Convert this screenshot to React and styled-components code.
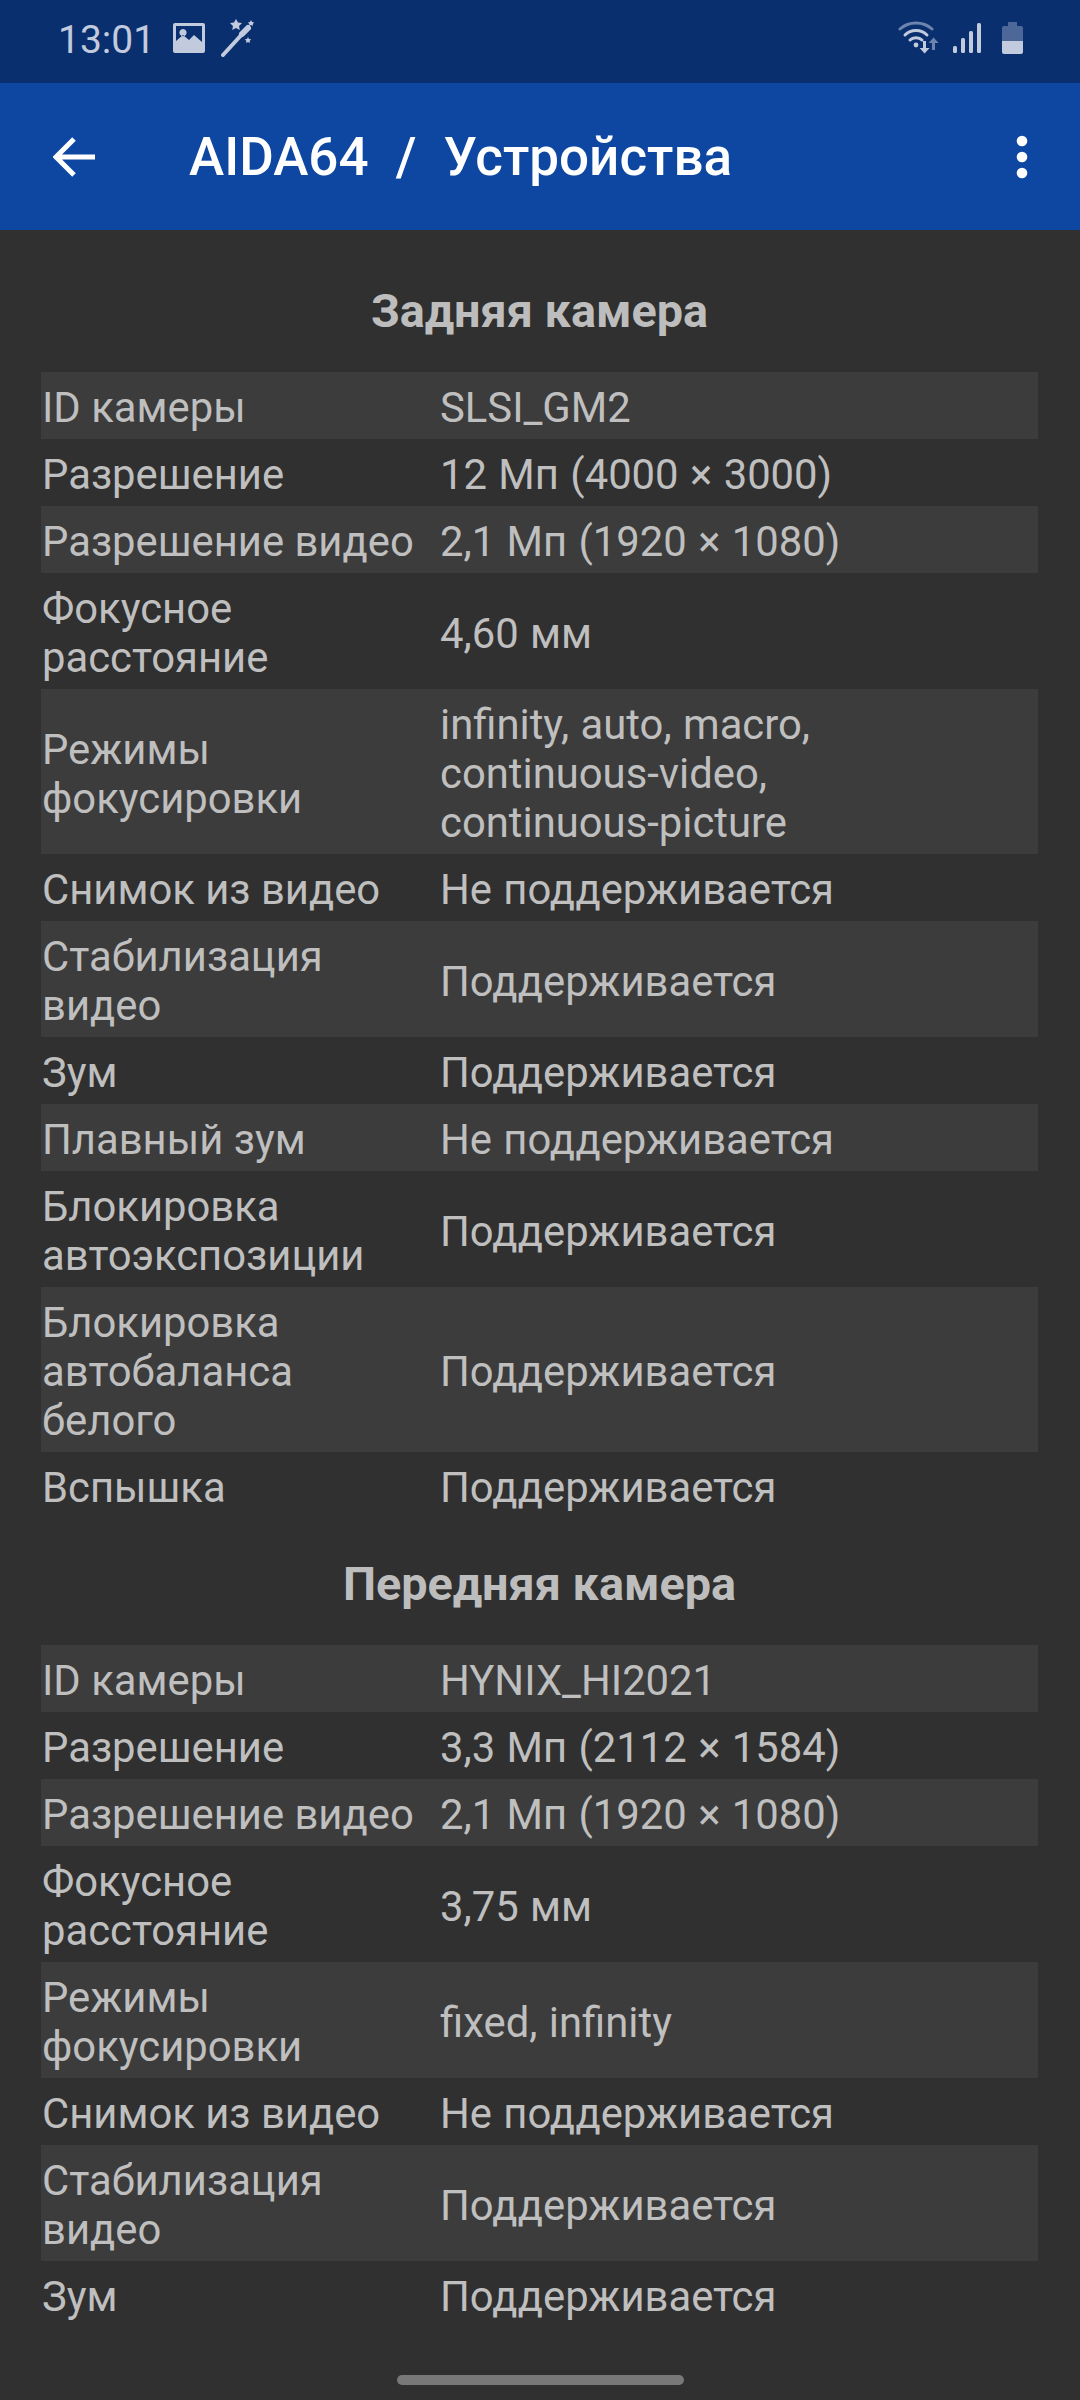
import React from 'react';
import styled, { createGlobalStyle } from 'styled-components';

const GlobalStyle = createGlobalStyle`
  html, body {
    margin: 0;
    padding: 0;
    background: #303030;
    font-family: Roboto, "Liberation Sans", sans-serif;
  }
`;

const rearRows = [
  ['ID камеры', 'SLSI_GM2'],
  ['Разрешение', '12 Мп (4000 × 3000)'],
  ['Разрешение видео', '2,1 Мп (1920 × 1080)'],
  ['Фокусное\nрасстояние', '4,60 мм'],
  ['Режимы\nфокусировки', 'infinity, auto, macro,\ncontinuous-video,\ncontinuous-picture'],
  ['Снимок из видео', 'Не поддерживается'],
  ['Стабилизация\nвидео', 'Поддерживается'],
  ['Зум', 'Поддерживается'],
  ['Плавный зум', 'Не поддерживается'],
  ['Блокировка\nавтоэкспозиции', 'Поддерживается'],
  ['Блокировка\nавтобаланса\nбелого', 'Поддерживается'],
  ['Вспышка', 'Поддерживается'],
];

const frontRows = [
  ['ID камеры', 'HYNIX_HI2021'],
  ['Разрешение', '3,3 Мп (2112 × 1584)'],
  ['Разрешение видео', '2,1 Мп (1920 × 1080)'],
  ['Фокусное\nрасстояние', '3,75 мм'],
  ['Режимы\nфокусировки', 'fixed, infinity'],
  ['Снимок из видео', 'Не поддерживается'],
  ['Стабилизация\nвидео', 'Поддерживается'],
  ['Зум', 'Поддерживается'],
];

const Page = styled.div`
  position: relative;
  width: 1080px;
  height: 2400px;
  overflow: hidden;
  background: #303030;
`;

const StatusBar = styled.div`
  height: 83px;
  background: #0a2f6e;
  color: #c2cbde;
  display: flex;
  align-items: center;
  padding: 0 57px 7px 58px;
  box-sizing: border-box;
`;

const Time = styled.span`
  font-size: 39px;
  line-height: 70px;
  padding-top: 4px;
  margin-right: 2px;
`;

const StatusLeft = styled.div`
  display: flex;
  align-items: center;
  gap: 16px;
  flex: 1;
`;

const StatusRight = styled.div`
  display: flex;
  align-items: center;
  gap: 13px;
`;

const BatterySlot = styled.div`
  display: flex;
  margin-left: 8px;
`;

const Toolbar = styled.header`
  height: 147px;
  background: #0e47a1;
  display: flex;
  align-items: center;
  padding: 0 52px 0 53px;
  box-sizing: border-box;
`;

const Title = styled.h1`
  flex: 1;
  margin: 0 0 0 93px;
  color: #fff;
  font-size: 53px;
  font-weight: 500;
  word-spacing: 0.4px;
  white-space: pre;
`;

const Content = styled.main`
  padding: 16px 42px 0 41px;
`;

const SectionTitle = styled.h2`
  margin: 0;
  height: 126px;
  box-sizing: border-box;
  padding-top: 37.5px;
  line-height: 55px;
  text-align: center;
  color: #bdbdbd;
  font-size: 46.8px;
  font-weight: 700;
`;

const Row = styled.div`
  display: grid;
  grid-template-columns: 399px 1fr;
  align-items: center;
  padding: 9px 0;
  background: ${(p) => (p.$striped ? '#3c3c3c' : 'transparent')};
  color: #bfbfbf;
  font-size: 41.8px;
  line-height: 49px;
`;

const Cell = styled.div`
  white-space: pre-line;
  padding-top: 2px;
  padding-left: ${(p) => (p.$label ? '1px' : '0')};
  word-spacing: ${(p) => (p.$label ? '0' : '1px')};
  margin-bottom: -2px;
`;

const HomeBar = styled.div`
  position: absolute;
  left: 397px;
  top: 2375px;
  width: 287px;
  height: 10px;
  border-radius: 5px;
  background: #787878;
`;

const ImageIcon = () => (
  <svg width="32" height="30" viewBox="0 0 32 30">
    <path
      fill="currentColor"
      fillRule="evenodd"
      d="M2 0h28a2 2 0 0 1 2 2v26a2 2 0 0 1-2 2H2a2 2 0 0 1-2-2V2a2 2 0 0 1 2-2zM3 3v15l7-6 6 5 5-5 8 7V3zM10 6a3.6 3.6 0 1 0 .01 0z"
    />
  </svg>
);

const WandIcon = () => (
  <svg width="34" height="38" viewBox="0 0 34 38">
    <path d="M2 36 L24 12" stroke="currentColor" strokeWidth="4" strokeLinecap="round" />
    <path d="M21 15 L27 9" stroke="currentColor" strokeWidth="6" strokeLinecap="round" />
    <path fill="currentColor" d="M15 0l2 3.6 4 .5-3 2.8.8 4L15 9l-3.8 1.9.8-4-3-2.8 4-.5z" />
    <path fill="currentColor" d="M30 1l1.1 2 2.2.4-1.6 1.5.4 2.2-2.1-1-2 1 .4-2.2-1.6-1.5 2.2-.4z" />
    <path fill="currentColor" d="M27 18l1 2 2.2.3-1.6 1.6.4 2.1-2-1-2 1 .4-2.1-1.6-1.6 2.2-.3z" />
  </svg>
);

const WifiIcon = () => (
  <svg width="42" height="34" viewBox="0 0 42 34">
    <g fill="none" strokeLinecap="round" strokeWidth="3">
      <path d="M2 8C11 0 25 0 34 8" stroke="#6c84ae" />
      <path d="M7 14C13 8 23 8 29 14" stroke="currentColor" />
      <path d="M12 19C15 16 21 16 24 19" stroke="currentColor" />
    </g>
    <circle cx="18" cy="24" r="2.4" fill="currentColor" />
    <path fill="currentColor" d="M25 20h3v7h3.6l-5 5.5-5-5.5H25z" />
    <path fill="#6c84ae" d="M34 29h3v-7h3.6l-5-5.5-5 5.5H34z" />
  </svg>
);

const SignalIcon = () => (
  <svg width="28" height="30" viewBox="0 0 28 30">
    <rect x="0" y="23" width="4" height="7" rx="1.5" fill="currentColor" />
    <rect x="8" y="15" width="4" height="15" rx="1.5" fill="currentColor" />
    <rect x="16" y="8" width="4" height="22" rx="1.5" fill="currentColor" />
    <rect x="24" y="0" width="4" height="30" rx="1.5" fill="currentColor" />
  </svg>
);

const BatteryIcon = () => (
  <svg width="21" height="32" viewBox="0 0 21 32">
    <path fill="#4d6898" d="M6 0h9v4h4a2 2 0 0 1 2 2v13H0V6a2 2 0 0 1 2-2h4z" />
    <path fill="currentColor" d="M0 19h21v11a2 2 0 0 1-2 2H2a2 2 0 0 1-2-2z" />
  </svg>
);

const BackIcon = () => (
  <svg width="43" height="42" viewBox="0 0 43 42">
    <path d="M21 3 L3 21 L21 39 M3 21 H42" fill="none" stroke="#fff" strokeWidth="5" />
  </svg>
);

const MenuIcon = () => (
  <svg width="12" height="44" viewBox="0 0 12 44">
    <circle cx="6" cy="6" r="5.3" fill="#fff" />
    <circle cx="6" cy="22" r="5.3" fill="#fff" />
    <circle cx="6" cy="38" r="5.3" fill="#fff" />
  </svg>
);

const InfoTable = ({ rows }) => (
  <div>
    {rows.map(([label, value], i) => (
      <Row key={label} $striped={i % 2 === 0}>
        <Cell $label>{label}</Cell>
        <Cell>{value}</Cell>
      </Row>
    ))}
  </div>
);

export default function App() {
  return (
    <Page>
      <GlobalStyle />
      <StatusBar>
        <StatusLeft>
          <Time>13:01</Time>
          <ImageIcon />
          <WandIcon />
        </StatusLeft>
        <StatusRight>
          <WifiIcon />
          <SignalIcon />
          <BatterySlot>
            <BatteryIcon />
          </BatterySlot>
        </StatusRight>
      </StatusBar>
      <Toolbar>
        <BackIcon />
        <Title>AIDA64  /  Устройства</Title>
        <MenuIcon />
      </Toolbar>
      <Content>
        <SectionTitle>Задняя камера</SectionTitle>
        <InfoTable rows={rearRows} />
        <SectionTitle>Передняя камера</SectionTitle>
        <InfoTable rows={frontRows} />
      </Content>
      <HomeBar />
    </Page>
  );
}
